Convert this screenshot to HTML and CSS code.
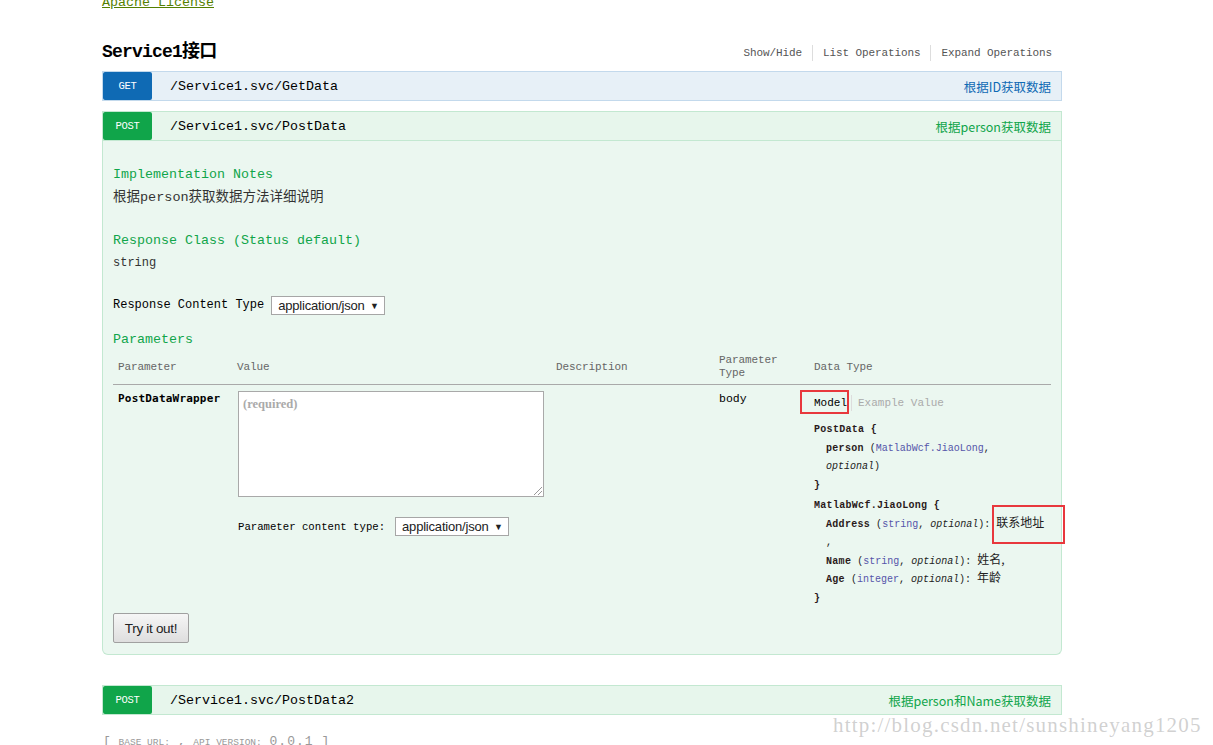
FILE: index.html
```html
<!DOCTYPE html>
<html>
<head>
<meta charset="utf-8">
<link rel="stylesheet" href="styles.css">
</head>
<body>
<div class="page">
  <a class="license" href="#">Apache License</a>

  <div class="resource-head">
    <h2 class="title">Service1接口</h2>
    <ul class="ops-links">
      <li>Show/Hide</li>
      <li>List Operations</li>
      <li>Expand Operations</li>
    </ul>
  </div>

  <div class="op op-get">
    <div class="op-head">
      <span class="verb">GET</span>
      <span class="path">/Service1.svc/GetData</span>
      <span class="summary">根据ID获取数据</span>
    </div>
  </div>

  <div class="op op-post">
    <div class="op-head">
      <span class="verb">POST</span>
      <span class="path">/Service1.svc/PostData</span>
      <span class="summary">根据person获取数据</span>
    </div>
    <div class="op-content">
      <h4 class="sec-title">Implementation Notes</h4>
      <p class="notes">根据person获取数据方法详细说明</p>

      <h4 class="sec-title rc">Response Class (Status default)</h4>
      <p class="rc-type">string</p>

      <div class="rct">
        <span>Response Content Type</span>
        <span class="select">application/json <span class="arrow">▼</span></span>
      </div>

      <h4 class="sec-title params">Parameters</h4>

      <div class="ptable">
        <div class="prow phead">
          <div class="cell">Parameter</div>
          <div class="cell">Value</div>
          <div class="cell">Description</div>
          <div class="cell two">Parameter<br>Type</div>
          <div class="cell">Data Type</div>
        </div>
        <div class="prow pbody">
          <div class="cell pname">PostDataWrapper</div>
          <div class="cell">
            <div class="textarea"><span class="ph">(required)</span><span class="grip"></span></div>
            <div class="pct">
              <span>Parameter content type:</span>
              <span class="select">application/json <span class="arrow">▼</span></span>
            </div>
          </div>
          <div class="cell"></div>
          <div class="cell ptype">body</div>
          <div class="cell dtype">
            <div class="tabs">
              <span class="tab active">Model<span class="mark mark-model"></span></span>
              <span class="tab sep">Example Value</span>
            </div>
            <div class="schema">
              <div class="ln"><b>PostData {</b></div>
              <div class="ln in"><b>person</b> (<span class="t">MatlabWcf.JiaoLong</span>,</div>
              <div class="ln in"><i>optional</i>)</div>
              <div class="ln"><b>}</b></div>
              <div class="ln gap"><b>MatlabWcf.JiaoLong {</b></div>
              <div class="ln in addr"><b>Address</b> (<span class="t">string</span>, <i>optional</i>): <span class="cn">联系地址</span><span class="mark mark-addr"></span></div>
              <div class="ln in">,</div>
              <div class="ln in"><b>Name</b> (<span class="t">string</span>, <i>optional</i>): <span class="cn">姓名,</span></div>
              <div class="ln in"><b>Age</b> (<span class="t">integer</span>, <i>optional</i>): <span class="cn">年龄</span></div>
              <div class="ln"><b>}</b></div>
            </div>
          </div>
        </div>
      </div>

      <button class="try">Try it out!</button>
    </div>
  </div>

  <div class="op op-post op-last">
    <div class="op-head">
      <span class="verb">POST</span>
      <span class="path">/Service1.svc/PostData2</span>
      <span class="summary">根据person和Name获取数据</span>
    </div>
  </div>

  <div class="footer">[ <span class="small">BASE URL:</span> , <span class="small">API VERSION:</span> <span class="ver">0.0.1</span> ]</div>
</div>
<div class="watermark">http://blog.csdn.net/sunshineyang1205</div>
</body>
</html>
```

FILE: styles.css
```css
html, body {
  margin: 0;
  padding: 0;
  background: #fff;
  overflow: hidden;
}
body {
  font-family: "Liberation Mono", "Noto Sans CJK SC", monospace;
  color: #333;
  height: 745px;
  position: relative;
}
.page {
  width: 960px;
  margin-left: 102px;
}
.license {
  display: block;
  margin-top: -4px;
  line-height: 14px;
  height: 13px;
  font-size: 13.33px;
  color: #547f00;
  text-decoration: underline;
}
.resource-head {
  display: flex;
  justify-content: space-between;
  align-items: center;
  margin-top: 28px;
  height: 28px;
  margin-bottom: 6px;
}
.title {
  margin: 0 0 4px;
  font-size: 18px;
  font-weight: bold;
  color: #000;
  letter-spacing: -0.8px;
  font-family: "Liberation Mono", "Noto Sans CJK SC", monospace;
}
.ops-links {
  list-style: none;
  display: flex;
  margin: 4px 10px 0 0;
  padding: 0;
  font-size: 11px;
  letter-spacing: -0.1px;
  color: #555;
}
.ops-links li {
  padding: 0 10px 0 10px;
  line-height: 16px;
  border-right: 1px solid #ddd;
}
.ops-links li:last-child {
  border-right: none;
  padding-right: 0;
}
.op {
  margin-bottom: 10px;
}
.op-head {
  display: flex;
  align-items: center;
  height: 28px;
  border: 1px solid;
}
.verb {
  width: 49px;
  height: 28px;
  line-height: 28px;
  text-align: center;
  color: #fff;
  font-size: 10.5px;
  border-radius: 2px;
  letter-spacing: -0.3px;
}
.path {
  margin-left: 18px;
  font-size: 13.33px;
  color: #000;
}
.summary {
  margin-left: auto;
  padding-right: 10px;
  font-family: "Noto Sans CJK SC", sans-serif;
  font-size: 12.5px;
}
.op-get .op-head {
  background: #e7f0f7;
  border-color: #c3d9ec;
}
.op-get .verb {
  background: #0f6ab4;
}
.op-get .summary {
  color: #0f6ab4;
}
.op-post .op-head {
  background: #e7f6ec;
  border-color: #c3e8d1;
}
.op-post .verb {
  background: #10a54a;
}
.op-post .summary {
  color: #10a54a;
}
.op-content {
  background: #ebf7f0;
  border: 1px solid #c3e8d1;
  border-top: none;
  border-radius: 0 0 6px 6px;
  padding: 24px 10px 11px;
}
.op-post {
  margin-bottom: 30px;
}
.op-last {
  margin-bottom: 0;
}
.sec-title {
  margin: 0 0 3px;
  font-size: 13.33px;
  font-weight: normal;
  line-height: 20px;
  color: #10a54a;
}
.notes {
  margin: 0;
  line-height: 20px;
  font-size: 13.5px;
  color: #333;
}
.rc {
  margin-top: 23px;
}
.rc-type {
  margin: 0;
  line-height: 18px;
  font-size: 12px;
  color: #333;
}
.rct {
  margin-top: 23px;
  height: 20px;
  display: flex;
  align-items: center;
  font-size: 12px;
  color: #000;
}
.select {
  display: inline-block;
  margin-left: 7px;
  height: 17px;
  line-height: 17px;
  padding: 0 5px 0 6px;
  border: 1px solid #a6a6a6;
  background: #fff;
  font-family: "Liberation Sans", Arial, sans-serif;
  font-size: 13px;
  color: #222;
  letter-spacing: -0.2px;
}
.arrow {
  font-size: 9px;
  margin-left: 2px;
  vertical-align: 1px;
}
.params {
  margin-top: 15px;
  margin-bottom: 3px;
}
.ptable {
  width: 938px;
}
.prow {
  display: grid;
  grid-template-columns: 119px 319px 163px 95px 1fr;
}
.phead {
  min-height: 28px;
  padding-bottom: 3px;
  border-bottom: 1px solid #a9a9a9;
  align-items: center;
  font-size: 11px;
  color: #666;
  letter-spacing: -0.1px;
}
.phead .cell {
  padding-left: 5px;
  line-height: 13px;
}
.pbody {
  padding-top: 6px;
}
.pbody .cell {
  padding-left: 5px;
}
.pname {
  font-family: "DejaVu Sans Mono", monospace;
  font-weight: bold;
  font-size: 11px;
  color: #000;
  line-height: 16px;
  letter-spacing: 0.2px;
}
.textarea {
  position: relative;
  box-sizing: border-box;
  width: 306px;
  height: 106px;
  margin-left: 1px;
  border: 1px solid #a9a9a9;
  background: #fff;
  padding: 3px 4px;
}
.ph {
  font-family: "Liberation Serif", serif;
  font-weight: bold;
  font-size: 12.5px;
  color: #aaa;
}
.grip {
  position: absolute;
  right: 1px;
  bottom: 1px;
  width: 8px;
  height: 8px;
  background: linear-gradient(135deg, transparent 45%, #999 45%, #999 52%, transparent 52%, transparent 70%, #999 70%, #999 77%, transparent 77%);
}
.pct {
  margin-top: 20px;
  margin-left: 1px;
  display: flex;
  align-items: center;
  height: 19px;
  font-size: 10.67px;
  color: #000;
}
.pct .select {
  margin-left: 10px;
}
.ptype {
  font-size: 11.5px;
  color: #000;
  line-height: 16px;
}
.dtype {
  font-size: 11px;
}
.tabs {
  display: flex;
  margin-top: 4px;
  line-height: 16px;
}
.tab {
  position: relative;
  color: #000;
}
.tab.sep {
  margin-left: 4px;
  padding-left: 6px;
  border-left: 1px solid #ddd;
  color: #aaa;
}
.mark {
  position: absolute;
  border: 2px solid #e8383d;
  box-sizing: border-box;
  pointer-events: none;
}
.mark-model {
  left: -14px;
  top: -5px;
  width: 49px;
  height: 24px;
}
.schema {
  margin-top: 10px;
  font-size: 10px;
  color: #222;
}
.schema .ln {
  height: 18.5px;
  line-height: 18.5px;
  white-space: nowrap;
}
.schema .gap {
  margin-top: 2px;
}
.schema .in {
  padding-left: 12px;
}
.schema b {
  color: #2a1a1a;
  letter-spacing: 0.3px;
}
.schema i {
  font-style: italic;
}
.schema .t {
  color: #55a;
}
.schema .cn {
  font-family: "Noto Sans CJK SC", sans-serif;
  font-size: 12px;
  line-height: 1;
  color: #222;
}
.addr {
  position: relative;
}
.mark-addr {
  left: 178px;
  top: -11px;
  width: 73px;
  height: 39px;
}
.try {
  display: block;
  margin-top: 5px;
  width: 76px;
  height: 30px;
  border: 1px solid #a0a0a0;
  border-radius: 2px;
  background: linear-gradient(#f6f6f6, #dedede);
  font-family: "Liberation Sans", Arial, sans-serif;
  font-size: 13.5px;
  color: #222;
  padding: 0;
  letter-spacing: -0.3px;
}
.footer {
  margin-top: 19px;
  margin-left: 1px;
  font-size: 13px;
  color: #999;
  line-height: 16px;
  font-family: "Liberation Mono", monospace;
  white-space: nowrap;
}
.footer .small {
  font-size: 9.5px;
  text-transform: uppercase;
}
.footer .ver {
  letter-spacing: 1px;
}
.watermark {
  position: absolute;
  left: 833px;
  top: 713px;
  font-family: "Liberation Serif", serif;
  font-size: 21px;
  color: rgba(170, 170, 170, 0.55);
  letter-spacing: 1.2px;
  white-space: nowrap;
}
```
